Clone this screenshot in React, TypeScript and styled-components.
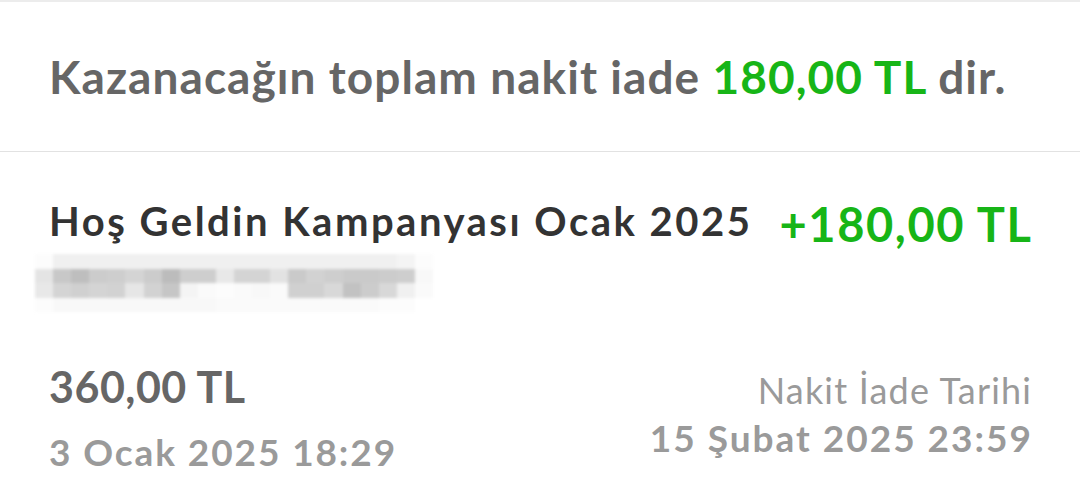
import React from 'react';
import styled, { createGlobalStyle } from 'styled-components';

const GlobalStyle = createGlobalStyle`
  html, body {
    margin: 0;
    padding: 0;
    background: #fff;
  }

  body {
    font-family: Lato, 'Noto Sans', sans-serif;
  }
`;

const Page = styled.div`
  width: 1080px;
  height: 498px;
  overflow: hidden;
  background: #fff;
  border-top: 2px solid #ececec;
  box-sizing: border-box;
`;

const Summary = styled.div`
  height: 150px;
  padding: 0 49px;
  display: flex;
  align-items: center;
  border-bottom: 1px solid #e2e2e2;
  box-sizing: border-box;

  p {
    margin: 0;
    font-size: 46px;
    line-height: 55px;
    font-weight: 700;
    letter-spacing: 1.05px;
    color: #666;
    white-space: nowrap;
  }
`;

const Green = styled.span`
  color: #17b517;
`;

const Item = styled.div`
  padding: 45px 49px 0;
`;

const TitleRow = styled.div`
  display: flex;
  justify-content: space-between;
  align-items: flex-start;
`;

const Title = styled.h3`
  margin: 0;
  font-size: 40px;
  line-height: 48px;
  font-weight: 700;
  letter-spacing: 2.5px;
  color: #333;
  white-space: nowrap;
`;

const Amount = styled.div`
  margin: -1px -1.6px 0 0;
  font-size: 47px;
  line-height: 56px;
  font-weight: 700;
  letter-spacing: 1.6px;
  color: #17b517;
  white-space: nowrap;
`;

// pixelated / blurred account line, as in the screenshot
const Censored = styled.div`
  margin: 2px 0 0 -14px;
  width: 398px;
  display: grid;
  grid-template-columns: repeat(22, 1fr);
  grid-auto-rows: 14.5px;
  filter: blur(1.5px);
`;

const Cell = styled.div<{ $shade: number }>`
  background: ${p => `rgb(${p.$shade}, ${p.$shade}, ${p.$shade})`};
`;

const Details = styled.div`
  margin-top: 49px;
  display: flex;
  justify-content: space-between;
  align-items: flex-start;
`;

const Column = styled.div<{ $right?: boolean }>`
  display: flex;
  flex-direction: column;
  align-items: ${p => (p.$right ? 'flex-end' : 'flex-start')};
  padding-top: ${p => (p.$right ? '8px' : '0')};
`;

const Price = styled.div`
  font-size: 43px;
  line-height: 52px;
  font-weight: 700;
  letter-spacing: 0.5px;
  color: #666;
`;

const DateText = styled.div<{ $gap: number; $right?: boolean }>`
  margin-top: ${p => p.$gap}px;
  margin-right: ${p => (p.$right ? '-2px' : '0')};
  font-size: 37px;
  line-height: 44px;
  font-weight: 700;
  letter-spacing: ${p => (p.$right ? '2px' : '1.9px')};
  color: #9a9a9a;
  white-space: nowrap;
`;

const Label = styled.div`
  margin-right: -1.2px;
  font-size: 36px;
  line-height: 43px;
  font-weight: 400;
  letter-spacing: 1.2px;
  color: #9a9a9a;
`;

const shades = [
  252, 240, 240, 240, 240, 240, 240, 240, 240, 240, 240, 240, 240, 240, 240, 240, 240, 240, 240, 240, 244, 252,
  228, 200, 190, 204, 206, 212, 204, 188, 206, 206, 232, 212, 212, 226, 202, 210, 206, 202, 202, 204, 206, 248,
  232, 212, 208, 212, 210, 230, 210, 198, 244, 250, 252, 250, 248, 250, 208, 208, 216, 194, 204, 216, 240, 250,
  252, 248, 248, 248, 248, 248, 248, 248, 248, 248, 250, 250, 250, 250, 250, 250, 250, 250, 250, 252, 252, 255
];

export default function App() {
  return (
    <Page>
      <GlobalStyle />
      <Summary>
        <p>
          Kazanacağın toplam nakit iade <Green>180,00 TL</Green> dir.
        </p>
      </Summary>
      <Item>
        <TitleRow>
          <Title>Hoş Geldin Kampanyası Ocak 2025</Title>
          <Amount>+180,00 TL</Amount>
        </TitleRow>
        <Censored>
          {shades.map((s, i) => (
            <Cell key={i} $shade={s} />
          ))}
        </Censored>
        <Details>
          <Column>
            <Price>360,00 TL</Price>
            <DateText $gap={17}>3 Ocak 2025 18:29</DateText>
          </Column>
          <Column $right>
            <Label>Nakit İade Tarihi</Label>
            <DateText $gap={4} $right>
              15 Şubat 2025 23:59
            </DateText>
          </Column>
        </Details>
      </Item>
    </Page>
  );
}
